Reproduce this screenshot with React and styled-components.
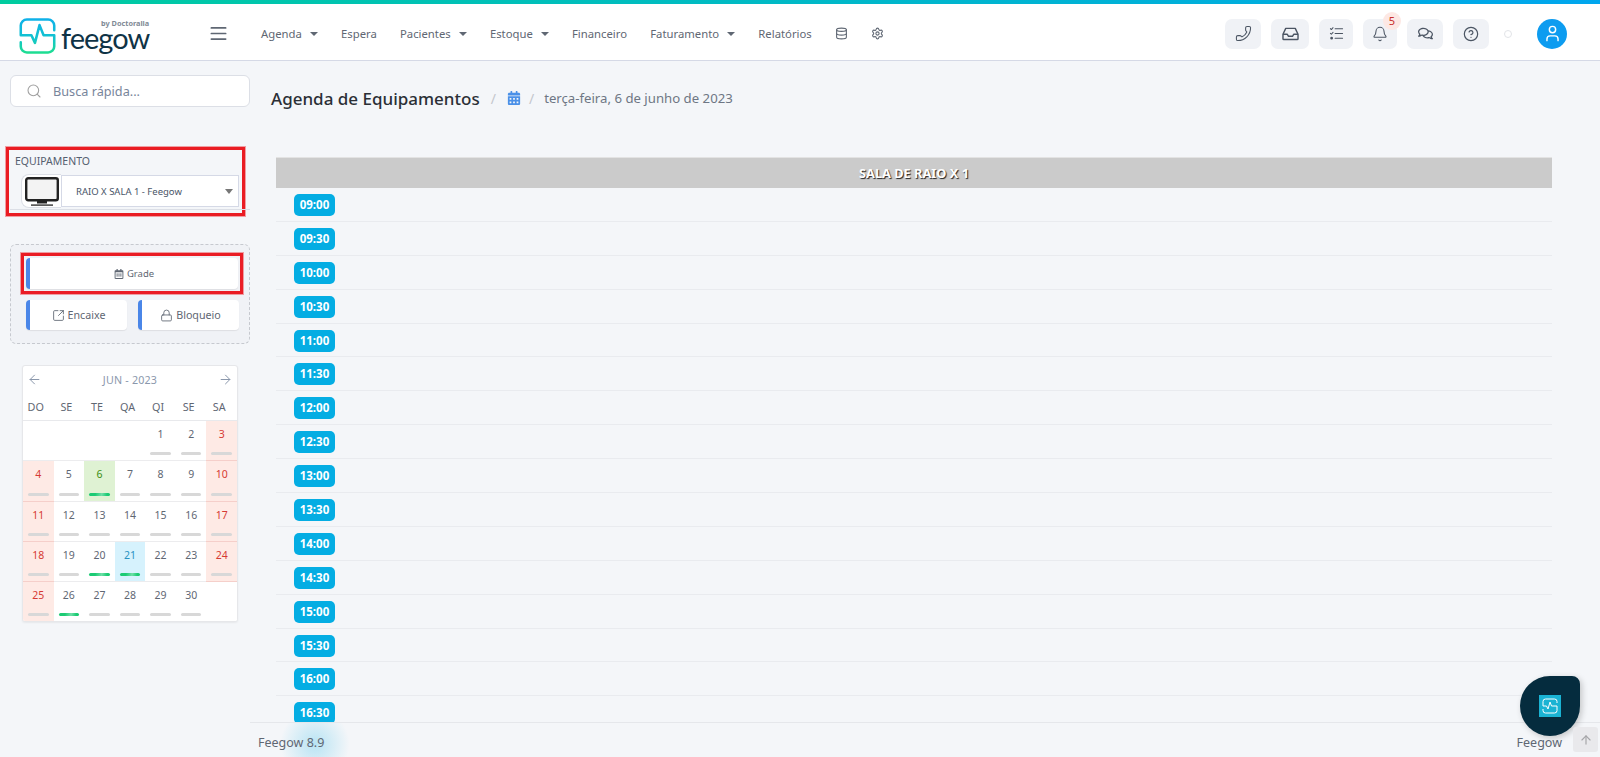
import styled, { createGlobalStyle } from "styled-components";
import {
  AlignJustify,
  Bell,
  CircleHelp,
  Database,
  Lock,
  Phone,
  Search,
  Settings,
  SquareArrowOutUpRight,
  ArrowLeft,
  ArrowRight,
  ArrowUp,
  User,
} from "lucide-react";
import { FaRegCalendarAlt, FaCalendarAlt, FaRegComments } from "react-icons/fa";

const GlobalStyle = createGlobalStyle`
  html, body {
    margin: 0;
    height: 100%;
    overflow: hidden;
    background: #f4f6f9;
    font-family: "Noto Sans", "Open Sans", sans-serif;
    color: #4a5568;
  }
  * { box-sizing: border-box; }
`;

const NAV = [
  { label: "Agenda", caret: true },
  { label: "Espera" },
  { label: "Pacientes", caret: true },
  { label: "Estoque", caret: true },
  { label: "Financeiro" },
  { label: "Faturamento", caret: true },
  { label: "Relatórios" },
];

const TIMES = [
  "09:00", "09:30", "10:00", "10:30", "11:00", "11:30", "12:00", "12:30", "13:00",
  "13:30", "14:00", "14:30", "15:00", "15:30", "16:00", "16:30",
];

const WEEK = ["DO", "SE", "TE", "QA", "QI", "SE", "SA"];
const DAYS = [
  [null, null, null, null, 1, 2, 3],
  [4, 5, 6, 7, 8, 9, 10],
  [11, 12, 13, 14, 15, 16, 17],
  [18, 19, 20, 21, 22, 23, 24],
  [25, 26, 27, 28, 29, 30, null],
];
const GREEN_DAYS = [6, 20, 21, 26];

const Logo = () => (
  <LogoWrap>
    <svg width="37" height="36" viewBox="0 0 36 35.500" fill="none">
      <defs>
        <linearGradient id="logoGrad" x1="0" y1="0" x2="0" y2="36" gradientUnits="userSpaceOnUse">
          <stop offset="0" stopColor="#0fb0ea" />
          <stop offset="0.55" stopColor="#12c3cf" />
          <stop offset="1" stopColor="#1fe08a" />
        </linearGradient>
      </defs>
      <path
        d="M1.500 17V7.500a6 6 0 0 1 6-6h21a6 6 0 0 1 6 6V12M34.500 17v11a6 6 0 0 1-6 6h-21a6 6 0 0 1-6-6v-4M1.500 17H12l3.500 7.500L20 7l4 10h10.500"
        stroke="url(#logoGrad)"
        strokeWidth="2.500"
        strokeLinejoin="round"
        strokeLinecap="round"
      />
    </svg>
    <LogoText>
      <small>by Doctoralia</small>
      <b>feegow</b>
    </LogoText>
  </LogoWrap>
);

const MonitorIcon = () => (
  <svg width="34" height="29" viewBox="0 0 34 29">
    <rect x="1.200" y="1.200" width="31.600" height="22" rx="2" fill="#f3f3f3" stroke="#222" strokeWidth="2.400" />
    <rect x="12" y="24" width="10" height="2.500" fill="#222" />
    <rect x="6" y="27.400" width="22" height="1.400" fill="#333" />
  </svg>
);

const InboxIcon = () => (
  <svg width="19" height="19" viewBox="0 0 24 24" fill="none" stroke="currentColor" strokeWidth="1.800" strokeLinejoin="round">
    <path d="M2.500 13 6 5.500h12l3.500 7.500v5.500a1 1 0 0 1-1 1h-17a1 1 0 0 1-1-1z" />
    <path d="M2.500 13H8l1.500 2.500h5L16 13h5.500" />
  </svg>
);

const TasksIcon = () => (
  <svg width="15" height="15" viewBox="0 0 16 16" fill="none" stroke="currentColor" strokeWidth="1.100" strokeLinecap="round" strokeLinejoin="round">
    <path d="M6.500 3h8M6.500 8h8M6.500 13h8" />
    <path d="M1.500 2.800l1 1 1.800-2M1.500 7.800l1 1 1.800-2" />
    <circle cx="2.800" cy="13" r="0.900" fill="currentColor" />
  </svg>
);

const App = () => {
  return (
    <>
      <GlobalStyle />
      <Page>
        <TopBar />
        <Header>
          <Logo />
          <MenuButton><AlignJustify size={19} strokeWidth={2.200} /></MenuButton>
          <Nav>
            {NAV.map((item) => (
              <NavItem key={item.label}>
                {item.label}
                {item.caret && <Caret />}
              </NavItem>
            ))}
            <NavIcon><Database size={13} /></NavIcon>
            <NavIcon><Settings size={13} /></NavIcon>
          </Nav>
          <Actions>
            <ActionButton $width={36}><FlippedPhone size={17} strokeWidth={1.500} /></ActionButton>
            <ActionButton $width={38}><InboxIcon /></ActionButton>
            <ActionButton $width={34}><TasksIcon /></ActionButton>
            <ActionButton $width={34}>
              <Bell size={16} strokeWidth={1.600} />
              <Badge>5</Badge>
            </ActionButton>
            <ActionButton $width={36}><FaRegComments size={15} /></ActionButton>
            <ActionButton $width={36}><CircleHelp size={16} strokeWidth={1.800} /></ActionButton>
            <StatusDot />
            <Avatar><User size={19} strokeWidth={1.800} /></Avatar>
          </Actions>
        </Header>
        <Body>
          <Sidebar>
            <SearchBox>
              <Search size={16} strokeWidth={1.600} color="#a0a0a0" />
              <span>Busca rápida...</span>
            </SearchBox>
            <Highlight $equip>
              <FieldLabel>EQUIPAMENTO</FieldLabel>
              <SelectRow>
                <IconAddon><MonitorIcon /></IconAddon>
                <Select>
                  RAIO X SALA 1 - Feegow
                  <SelectCaret />
                </Select>
              </SelectRow>
            </Highlight>
            <DashedBox>
              <Highlight>
                <ActionCard $tall>
                  <FaRegCalendarAlt size={10} />
                  Grade
                </ActionCard>
              </Highlight>
              <CardRow>
                <ActionCard>
                  <SquareArrowOutUpRight size={13} strokeWidth={1.600} />
                  Encaixe
                </ActionCard>
                <ActionCard>
                  <Lock size={13} strokeWidth={1.600} />
                  Bloqueio
                </ActionCard>
              </CardRow>
            </DashedBox>
            <Calendar>
              <CalHeader>
                <ArrowLeft size={15} strokeWidth={1.600} />
                JUN - 2023
                <ArrowRight size={15} strokeWidth={1.600} />
              </CalHeader>
              <CalGrid>
                {WEEK.map((d, i) => <WeekDay key={i}>{d}</WeekDay>)}
              </CalGrid>
              {DAYS.map((week, w) => (
                <CalGrid key={w}>
                  {week.map((day, i) => (
                    <DayCell
                      key={i}
                      $weekend={day !== null && (i === 0 || i === 6)}
                      $today={day === 6}
                      $selected={day === 21}
                    >
                      {day}
                      {day !== null && <DayBar $green={GREEN_DAYS.includes(day)} />}
                    </DayCell>
                  ))}
                </CalGrid>
              ))}
            </Calendar>
          </Sidebar>
          <Main>
            <TitleRow>
              <Title>Agenda de Equipamentos</Title>
              <Slash>/</Slash>
              <CrumbIcon size={14} color="#4a90e8" />
              <Slash>/</Slash>
              <Crumb>terça-feira, 6 de junho de 2023</Crumb>
            </TitleRow>
            <TableWrap>
              <TableHead>SALA DE RAIO X 1</TableHead>
              {TIMES.map((t) => (
                <TimeRow key={t}>
                  <TimeBadge>{t}</TimeBadge>
                </TimeRow>
              ))}
            </TableWrap>
            <Footer>
              <span>Feegow 8.9</span>
              <FooterRight>Feegow</FooterRight>
            </Footer>
          </Main>
        </Body>
        <Fab>
          <FabIcon>
            <svg width="16" height="16" viewBox="0 0 16 16" fill="none" stroke="#fff" strokeWidth="1" strokeLinejoin="round">
              <path d="M1 8V3.500A2.500 2.500 0 0 1 3.500 1h9A2.500 2.500 0 0 1 15 3.500V5M15 8v4.500a2.500 2.500 0 0 1-2.500 2.500h-9A2.500 2.500 0 0 1 1 12.500V11M1 8h3.500l1.500 3 2-7 1.500 4H15" />
            </svg>
          </FabIcon>
        </Fab>
        <ScrollTop><ArrowUp size={14} strokeWidth={2} /></ScrollTop>
      </Page>
    </>
  );
};

const Page = styled.div`
  position: relative;
  width: 100%;
  height: 757px;
  overflow: hidden;
  display: flex;
  flex-direction: column;
`;

const TopBar = styled.div`
  height: 4px;
  flex: none;
  background: linear-gradient(90deg, #00cc9f 0%, #00a6ee 100%);
`;

const Header = styled.header`
  height: 57px;
  flex: none;
  display: flex;
  align-items: center;
  background: #fff;
  border-bottom: 1px solid #d5d9e6;
  padding: 3px 33px 0 19px;
`;

const LogoWrap = styled.div`
  display: flex;
  align-items: center;
  gap: 5px;
  width: 190px;
  margin-top: 4px;
`;

const LogoText = styled.div`
  display: flex;
  flex-direction: column;
  align-items: flex-end;
  margin-top: -3px;

  small {
    font-size: 7.300px;
    font-weight: 700;
    line-height: 7px;
    color: #7f8a95;
  }

  b {
    font-family: "Lato", sans-serif;
    font-size: 29px;
    font-weight: 400;
    line-height: 22px;
    letter-spacing: -1px;
    color: #0f3346;
  }
`;

const MenuButton = styled.div`
  width: 52px;
  display: flex;
  color: #5f6773;
`;

const Nav = styled.nav`
  display: flex;
  align-items: center;
  gap: 23.200px;
  flex: 1;
`;

const NavItem = styled.div`
  display: flex;
  align-items: center;
  gap: 8px;
  font-size: 11.300px;
  color: #5f6773;
`;

const Caret = styled.span`
  width: 0;
  height: 0;
  border-left: 4px solid transparent;
  border-right: 4px solid transparent;
  border-top: 4px solid #5f6773;
`;

const NavIcon = styled.span`
  display: flex;
  color: #5f6773;
`;

const Actions = styled.div`
  display: flex;
  align-items: center;
  gap: 10px;
`;

const ActionButton = styled.div`
  position: relative;
  width: ${(p) => p.$width}px;
  height: 30px;
  display: flex;
  align-items: center;
  justify-content: center;
  border-radius: 7px;
  background: #f0f2f6;
  color: #4b5563;
`;

const FlippedPhone = styled(Phone)`
  transform: scaleX(-1);
`;

const Badge = styled.span`
  position: absolute;
  top: -7px;
  left: 20px;
  width: 18px;
  height: 18px;
  border-radius: 50%;
  background: #fde8e4;
  color: #c9302c;
  font-size: 11px;
  line-height: 18px;
  text-align: center;
`;

const StatusDot = styled.span`
  width: 8px;
  height: 8px;
  margin: 0 0 0 5px;
  border-radius: 50%;
  border: 1px solid #e2e4e8;
  background: #fff;
`;

const Avatar = styled.div`
  width: 30px;
  height: 30px;
  margin-left: 15px;
  border-radius: 50%;
  display: flex;
  align-items: center;
  justify-content: center;
  background: #0d9cf0;
  color: #fff;
`;

const Body = styled.div`
  flex: 1;
  min-height: 0;
  display: flex;
`;

const Sidebar = styled.aside`
  width: 250px;
  flex: none;
  padding: 14px 0 0 10px;
  display: flex;
  flex-direction: column;
`;

const SearchBox = styled.div`
  width: 240px;
  height: 32px;
  display: flex;
  align-items: center;
  gap: 11px;
  padding-left: 15px;
  background: #fff;
  border: 1px solid #dcdfe6;
  border-radius: 6px;
  font-size: 12.700px;
  color: #78859b;
`;

const Highlight = styled.div`
  border: 3px solid #ea1c24;
  outline: 1px solid rgba(234, 28, 36, 0.4);
  ${(p) =>
    p.$equip
      ? `
    position: relative;
    width: 239px;
    height: 69px;
    margin: 40px 0 0 -4px;
    padding: 4px 0 0 6px;

    &::after {
      content: "";
      position: absolute;
      left: 1px;
      right: -8px;
      bottom: 3px;
      height: 1px;
      background: #dcdfe6;
    }
  `
      : `
    width: 222px;
    height: 41px;
    margin: 8px 0 0 10px;
    padding: 2px;
    display: flex;
  `}
`;

const FieldLabel = styled.div`
  font-size: 10.500px;
  line-height: 15px;
  color: #55606f;
`;

const SelectRow = styled.div`
  display: flex;
  align-items: flex-start;
  margin: 5px 0 0 6px;
`;

const IconAddon = styled.div`
  position: relative;
  z-index: 1;
  width: 40px;
  height: 34px;
  flex: none;
  display: flex;
  align-items: center;
  justify-content: center;
  background: #fff;
  border: 1px solid #dcdfe6;
  border-right: 0;
  border-radius: 8px 0 0 8px;
`;

const Select = styled.div`
  width: 178px;
  height: 32px;
  flex: none;
  margin-top: 1px;
  display: flex;
  align-items: center;
  justify-content: space-between;
  padding: 0 5px 0 14px;
  background: #fff;
  border: 1px solid #d5d9e6;
  font-size: 9.500px;
  color: #4a5568;
`;

const SelectCaret = styled.span`
  width: 0;
  height: 0;
  border-left: 4px solid transparent;
  border-right: 4px solid transparent;
  border-top: 5px solid #777;
`;

const DashedBox = styled.div`
  width: 240px;
  height: 100px;
  margin-top: 28px;
  border: 1px dashed #c6c9cf;
  border-radius: 6px;
  background: #f0f2f6;
  display: flex;
  flex-direction: column;
`;

const CardRow = styled.div`
  display: flex;
  gap: 11px;
  margin: 6px 10px 0 15px;
`;

const ActionCard = styled.div`
  flex: 1;
  height: ${(p) => (p.$tall ? 31 : 30)}px;
  display: flex;
  align-items: center;
  justify-content: center;
  gap: 3px;
  background: #fff;
  border-left: 4px solid #4a86e8;
  border-radius: 4px;
  box-shadow: 0 1px 1px rgba(0, 0, 0, 0.08);
  font-size: ${(p) => (p.$tall ? 9.500 : 10.700)}px;
  color: #5f6773;
`;

const Calendar = styled.div`
  width: 216px;
  height: 257px;
  margin: 21px 0 0 12px;
  background: #fff;
  border: 1px solid #e6e7ea;
  border-radius: 3px;
  box-shadow: 0 1px 2px rgba(0, 0, 0, 0.06);
  overflow: hidden;
`;

const CalHeader = styled.div`
  height: 27px;
  display: flex;
  align-items: center;
  justify-content: space-between;
  padding: 0 4px;
  font-size: 10.700px;
  letter-spacing: 0.200px;
  color: #8b98ac;
`;

const CalGrid = styled.div`
  display: grid;
  grid-template-columns: repeat(7, 1fr);
`;

const WeekDay = styled.div`
  height: 28px;
  padding-right: 5px;
  display: flex;
  align-items: center;
  justify-content: center;
  border-bottom: 1px solid #e8e9ec;
  font-size: 10.800px;
  color: #5f6773;
`;

const DayCell = styled.div`
  position: relative;
  height: 40.300px;
  padding-top: 6px;
  text-align: center;
  font-size: 10.500px;
  line-height: 15px;
  border-bottom: 1px solid ${(p) => (p.$weekend ? "#f5cfca" : "#ececee")};
  background: ${(p) =>
    p.$weekend ? "#feeae5" : p.$today ? "#dff2d3" : p.$selected ? "#d6f2fd" : "#fff"};
  color: ${(p) =>
    p.$weekend ? "#d63a34" : p.$today ? "#3d8f12" : p.$selected ? "#2a93c2" : "#5f6773"};
`;

const DayBar = styled.span`
  position: absolute;
  left: 5px;
  right: 5px;
  bottom: 5px;
  height: 3px;
  border-radius: 2px;
  background: ${(p) =>
    p.$green ? "linear-gradient(100deg, #1ccb74 30%, #6fe0a8 60%, #1ccb74 85%)" : "#d8d8d8"};
`;

const Main = styled.main`
  position: relative;
  flex: 1;
  min-width: 0;
  display: flex;
  flex-direction: column;
`;

const TitleRow = styled.div`
  height: 30px;
  margin-top: 22px;
  padding-left: 21px;
  display: flex;
  align-items: center;
  gap: 11px;
`;

const Title = styled.h1`
  margin: 0;
  font-size: 17px;
  font-weight: 500;
  color: #2b2f36;
`;

const Slash = styled.span`
  font-size: 14px;
  color: #c4c7cd;
`;

const CrumbIcon = styled(FaCalendarAlt)`
  margin-right: -3px;
`;

const Crumb = styled.span`
  margin-left: -1px;
  font-size: 13.200px;
  color: #6e7684;
`;

const TableWrap = styled.div`
  flex: 1;
  min-height: 0;
  overflow: hidden;
  margin: 44px 48px 0 26px;
`;

const TableHead = styled.div`
  height: 31px;
  display: flex;
  align-items: center;
  justify-content: center;
  background: #cbcbcb;
  border-top: 1px solid #e3e3e3;
  color: #fff;
  font-size: 12.800px;
  font-weight: 700;
  text-shadow: 1px 1px 1px #222;
`;

const TimeRow = styled.div`
  height: 33.900px;
  padding: 6px 0 0 18px;
  border-bottom: 1px solid #e9ebef;
`;

const TimeBadge = styled.span`
  display: block;
  width: 41px;
  height: 22px;
  border-radius: 5px;
  background: #04ade3;
  color: #fff;
  font-size: 11.500px;
  font-weight: 700;
  line-height: 22px;
  text-align: center;
`;

const Footer = styled.footer`
  position: relative;
  height: 35px;
  flex: none;
  display: flex;
  align-items: center;
  justify-content: space-between;
  padding: 4px 38px 0 8px;
  background: #f4f6f9;
  border-top: 1px solid #e5e7eb;
  font-size: 12.500px;
  color: #5f6773;
  overflow: hidden;

  &::before {
    content: "";
    position: absolute;
    left: 30px;
    top: -14px;
    width: 70px;
    height: 70px;
    background: radial-gradient(circle, rgba(5, 173, 227, 0.25) 0%, rgba(5, 173, 227, 0) 70%);
  }

  span {
    position: relative;
  }
`;

const FooterRight = styled.span``;

const Fab = styled.div`
  position: absolute;
  left: 1520px;
  top: 676px;
  width: 60px;
  height: 60px;
  display: flex;
  align-items: center;
  justify-content: center;
  background: #052c3e;
  border-radius: 50% 8px 50% 50%;
  box-shadow: 2px 2px 6px rgba(0, 0, 0, 0.2);
`;

const FabIcon = styled.div`
  width: 22px;
  height: 22px;
  display: flex;
  align-items: center;
  justify-content: center;
  background: #1ab3d3;
`;

const ScrollTop = styled.div`
  position: absolute;
  left: 1573px;
  top: 727px;
  width: 25px;
  height: 25px;
  display: flex;
  align-items: center;
  justify-content: center;
  border-radius: 3px;
  background: #e9e9ec;
  color: #a5a5a8;
`;

export default App;
